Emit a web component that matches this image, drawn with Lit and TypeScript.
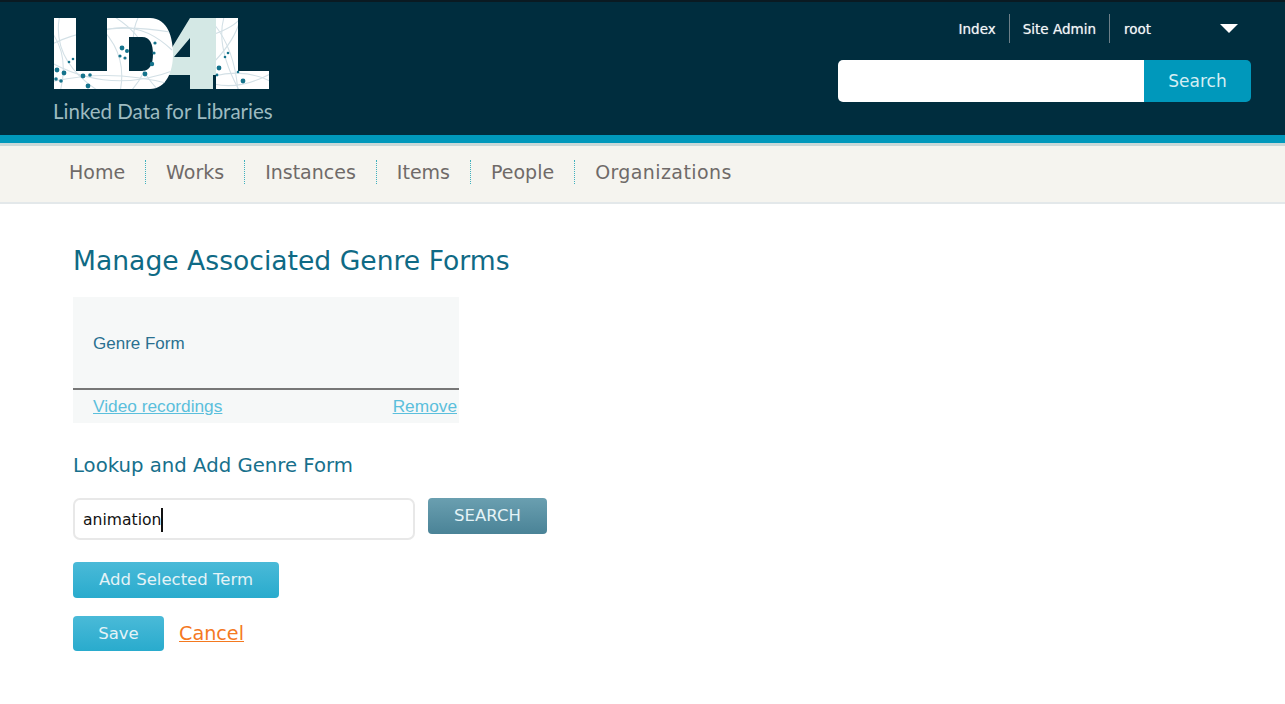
import { LitElement, html, css, svg } from "lit";
import { customElement } from "lit/decorators.js";

const dots: [number, number, number][] = [
  [57,70,2.4],[64,73,2.4],[56,79,1.8],[61,81,1.8],[69,62,1.3],[73,59,1.3],[83,76,2.4],[90,75,1.8],[88,86,2.4],
  [122,48,2.4],[127,51,2],[120,56,1.6],[125,58,1.6],[155,43,1.6],[154,53,1.6],[152,64,2.2],[145,74,2.4],
  [219,68,2.4],[217,75,1.4],[225,57,1.3],[228,53,1.3],[243,81,2.4],[238,72,1.3],
];
const arcs = [
  "M50 45 Q100 20 170 32","M50 62 Q110 95 175 70","M60 14 Q50 60 100 92","M84 14 Q130 45 120 92",
  "M110 14 Q170 50 130 92","M140 14 Q120 50 160 92","M50 82 Q110 68 170 84","M50 30 Q70 55 60 92",
  "M105 30 Q140 20 172 50","M212 35 Q240 25 242 14","M214 62 Q235 40 240 20","M214 24 Q235 50 238 92",
  "M214 76 Q245 68 272 82","M225 14 Q214 45 240 92","M214 84 Q240 90 270 74",
];

@customElement("app-root")
export class AppRoot extends LitElement {
  static styles = css`
    :host { display: block; width: 1285px; height: 704px; background: #fff; overflow: hidden; font-family: "DejaVu Sans", sans-serif; }
    header { height: 133px; margin: 0; border-top: 2px solid #0a1a22; background: #002d3e; display: flex; justify-content: space-between; padding: 0 34px 0 50px; }
    .brand { display: flex; flex-direction: column; }
    .logo { display: block; width: 224px; height: 76px; margin-top: 12px; filter: blur(.4px); }
    .tagline { font-family: Lato, sans-serif; font-size: 20.5px; line-height: 24px; color: #9dbbc0; margin: 9px 0 0 3px; white-space: nowrap; }
    .tools { width: 413px; display: flex; flex-direction: column; }
    .links { display: flex; align-items: center; height: 29px; margin-top: 12px; justify-content: flex-end; font-size: 13.5px; color: #f2f6f7; text-shadow: 0 0 1px rgba(255,255,255,.6); }
    .links span { height: 29px; line-height: 30px; padding: 0 13px; border-right: 1px solid #6d7f88; white-space: nowrap; }
    .links span.root { border-right: none; padding: 0 0 0 14px; width: 96px; }
    .caret { width: 0; height: 0; border-left: 9px solid transparent; border-right: 9px solid transparent; border-top: 9px solid #fff; margin-right: 13px; }
    .search { display: flex; height: 42px; margin-top: 17px; }
    .search .box { width: 306px; background: #fff; border-radius: 5px 0 0 5px; }
    .search .go { flex: 1; background: #0098bb; color: #d5eef3; border-radius: 0 5px 5px 0; font-size: 17px; line-height: 42px; text-align: center; }
    .stripe { height: 8px; background: #0098bb; border-bottom: 3px solid #c9d8d8; }
    nav { box-sizing: border-box; height: 58px; padding-bottom: 4px; background: #f5f4ef; border-bottom: 2px solid #e3e8ea; display: flex; align-items: center; padding-left: 49px; font-size: 19px; color: #6f6a68; }
    nav a { padding: 0 20px; height: 24px; line-height: 24px; border-right: 1px dotted #3fb0bd; white-space: nowrap; }
    nav a:last-child { border-right: none; letter-spacing: .4px; }
    main { padding: 0 0 0 73px; }
    h1 { margin: 39px 0 0; font-size: 26.6px; line-height: 36px; font-weight: 400; color: #0f6a85; white-space: nowrap; }
    .table { width: 386px; height: 126px; margin-top: 18px; background: #f6f8f8; display: grid; grid-template-rows: 93px 1fr; font-family: "Liberation Sans", sans-serif; }
    .th { border-bottom: 2px solid #777; padding-left: 20px; padding-top: 2px; display: flex; align-items: center; font-size: 17px; color: #2a7090; }
    .tr { display: flex; justify-content: space-between; align-items: center; padding: 0 2px 0 20px; font-size: 17.3px; color: #5bbfdc; text-decoration: underline; }
    h2 { margin: 30px 0 0; font-size: 19.7px; line-height: 26px; font-weight: 400; color: #17708c; white-space: nowrap; }
    .lookup { display: flex; gap: 13px; margin-top: 19px; align-items: flex-start; }
    .input { box-sizing: border-box; width: 342px; height: 42px; border: 2px solid #e8e8e8; border-radius: 7px; padding: 2px 0 0 8px; font-size: 15.6px; line-height: 38px; color: #111; display: flex; align-items: center; }
    .cursor { width: 2px; height: 24px; background: #111; }
    .btn { box-sizing: border-box; border-radius: 4px; height: 36px; line-height: 36px; text-align: center; font-size: 16.5px; color: #e4f3f7; background: linear-gradient(#4abad8, #29abcd); white-space: nowrap; }
    .dark { width: 119px; background: linear-gradient(#6a9fb0, #4a8397); }
    .add { width: 206px; margin-top: 22px; }
    .actions { display: flex; align-items: center; margin-top: 18px; }
    .save { width: 91px; height: 35px; line-height: 35px; }
    .cancel { margin-left: 15px; font-size: 19.2px; color: #f4791f; text-decoration: underline; }
  `;

  logo() {
    const shape = "M4 4 H26 V57 H57 V4 H100 C118 4 123 24 123 40 C123 58 116 75 100 75 H4 Z M79 23 V57 H92 C100 57 103 50 103 40 C103 30 100 23 92 23 Z";
    const l2 = "M166 4 H188 V57 H219 V75 H166 Z";
    return html`<svg class="logo" viewBox="0 0 224 76" role="img" aria-label="LD4L">
      <defs><clipPath id="c"><path clip-rule="evenodd" d="${shape}"></path><path d="${l2}"></path></clipPath></defs>
      <path fill="#d4e8e5" fill-rule="evenodd" d="M140 4 H166 V61 H163 V75 H140 V61 H112 V50 Z M140 24 L124 43 H140 Z"></path>
      <path fill="#fff" fill-rule="evenodd" d="${shape}"></path><path fill="#fff" d="${l2}"></path>
      <g clip-path="url(#c)"><g transform="translate(-50 -14)" fill="none" stroke="#d3e0e6" stroke-width="1.1">
        ${arcs.map((d) => svg`<path d="${d}"></path>`)}
      </g></g>
      <g fill="#14738c" transform="translate(-50 -14)">
        ${dots.map(([x, y, r]) => svg`<circle cx="${x}" cy="${y}" r="${r}"></circle>`)}
      </g>
    </svg>`;
  }

  render() {
    return html`
      <header>
        <div class="brand">
          ${this.logo()}
          <div class="tagline">Linked Data for Libraries</div>
        </div>
        <div class="tools">
          <div class="links"><span>Index</span><span>Site Admin</span><span class="root">root</span><i class="caret"></i></div>
          <div class="search"><div class="box"></div><div class="go">Search</div></div>
        </div>
      </header>
      <div class="stripe"></div>
      <nav><a>Home</a><a>Works</a><a>Instances</a><a>Items</a><a>People</a><a>Organizations</a></nav>
      <main>
        <h1>Manage Associated Genre Forms</h1>
        <div class="table">
          <div class="th">Genre Form</div>
          <div class="tr"><span>Video recordings</span><span>Remove</span></div>
        </div>
        <h2>Lookup and Add Genre Form</h2>
        <div class="lookup">
          <div class="input">animation<i class="cursor"></i></div>
          <div class="btn dark">SEARCH</div>
        </div>
        <div class="btn add">Add Selected Term</div>
        <div class="actions"><div class="btn save">Save</div><span class="cancel">Cancel</span></div>
      </main>
    `;
  }
}
